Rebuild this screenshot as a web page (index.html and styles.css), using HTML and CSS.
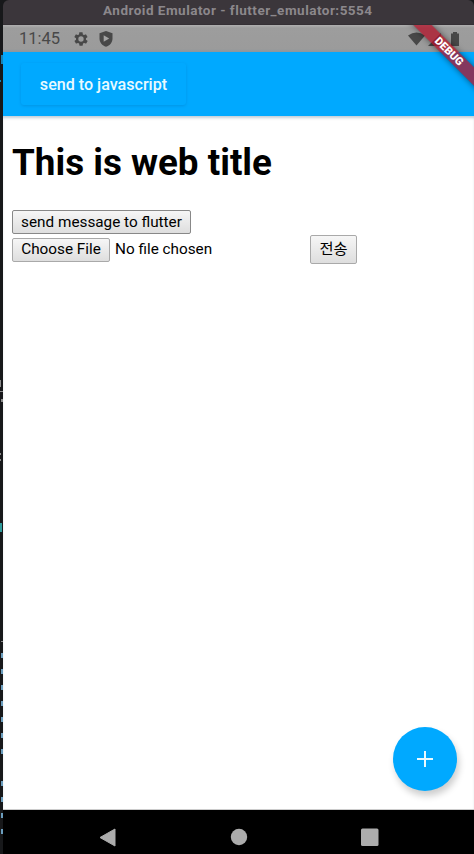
FILE: index.html
```
<!DOCTYPE html>
<html lang="ko">
<head>
    <meta charset="UTF-8">
    <title>Android Emulator</title>
    <link rel="stylesheet" href="styles.css">
</head>
<body>
    <svg class="editor" width="3" height="854">
        <g fill="#1684b8">
            <rect x="1" y="55" width="2" height="9"/>
            <rect y="80" width="1" height="2"/>
        </g>
        <g fill="#8a8a8a">
            <rect y="380" width="1" height="7"/>
            <rect y="391" width="3" height="1"/>
            <rect x="1" y="399" width="2" height="3"/>
            <rect y="453" width="1" height="2"/>
            <rect y="459" width="1" height="2"/>
            <rect x="1" y="641" width="2" height="1"/>
        </g>
        <rect y="523" width="2" height="9" fill="#2f9c9c"/>
        <path d="M2 653v5M2 669v5M2 685v5M2 701v5M2 717v5M2 733v5M2 749v5M2 781v5M2 797v5M2 813v5M2 829v5" stroke="#6b9dbd" stroke-width="2"/>
    </svg>
    <div class="emulator">
        <div class="titlebar"><span>Android Emulator - flutter_emulator:5554</span></div>
        <div class="screen">
            <div class="status">
                <span class="time">11:45</span>
                <svg class="gear" width="16" height="16" viewBox="0 0 24 24">
                    <path d="M19.4 13c0-.3.1-.6.1-1s0-.7-.1-1l2.1-1.600c.2-.2.3-.4.1-.7l-2-3.400c-.1-.2-.4-.3-.6-.2l-2.500 1c-.5-.4-1.100-.7-1.700-1l-.4-2.600c0-.3-.2-.5-.5-.5h-4c-.3 0-.5.2-.5.4l-.4 2.700c-.6.2-1.100.6-1.700 1l-2.500-1c-.2-.1-.5 0-.6.2l-2 3.400c-.1.2-.1.5.1.7L4.600 11c0 .3-.1.7-.1 1s0 .7.100 1l-2.100 1.600c-.2.2-.3.4-.1.7l2 3.400c.1.2.4.3.6.2l2.500-1c.5.4 1.100.7 1.700 1l.4 2.600c0 .3.200.500.500.500h4c.3 0 .5-.2.5-.5l.4-2.600c.6-.3 1.200-.6 1.700-1l2.500 1c.2.1.5 0 .6-.2l2-3.400c.1-.2.1-.5-.1-.7zM12 16a4 4 0 1 1 0-8 4 4 0 0 1 0 8z" fill="#484848"/>
                </svg>
                <svg class="shield" width="14" height="16" viewBox="0 0 14 16">
                    <path d="M7 0l6.500 2.300v5.200c0 4-2.700 7-6.500 8.300C3.200 14.500.5 11.500.5 7.500V2.300z" fill="#484848"/>
                    <path d="M4.700 4.200v6.600l5.500-3.300z" fill="#a3a3a3"/>
                </svg>
                <svg class="signals" width="54" height="16" viewBox="0 0 54 16">
                    <path d="M0 4.500Q8.500-1.500 17 4.500L8.500 14.500z" fill="#484848"/>
                    <path d="M20 15L33 2v13z" fill="#484848"/>
                    <path d="M43 2.500h2V1h4v1.500h2V15h-8z" fill="#484848"/>
                </svg>
            </div>
            <div class="appbar"><button class="js">send to javascript</button></div>
            <div class="debug"><span>DEBUG</span></div>
        </div>
        <div class="webview">
            <h1>This is web title</h1>
            <div><button class="native message">send message to flutter</button></div>
            <div class="upload">
                <button class="native choose">Choose File</button>
                <span class="filename">No file chosen</span>
                <button class="native submit">전송</button>
            </div>
            <div class="fab">
                <svg width="18" height="18"><path d="M9 1v16M1 9h16" stroke="#e9faff" stroke-width="2"/></svg>
            </div>
        </div>
        <div class="navbar">
            <svg width="471" height="44">
                <path d="M97 27.500L112 19v17z" fill="#acacac" stroke="#acacac" stroke-linejoin="round"/>
                <circle cx="236" cy="27" r="8.200" fill="#acacac"/>
                <rect x="358" y="18.500" width="17.500" height="17.500" rx="1.500" fill="#acacac"/>
            </svg>
        </div>
    </div>
</body>
</html>
```

FILE: styles.css
```
* { box-sizing: border-box; }
body {
    margin: 0;
    display: flex;
    width: 474px;
    height: 854px;
    overflow: hidden;
    background: #17181a;
    font-family: Roboto, "Noto Sans CJK KR", sans-serif;
}
.editor {
    flex: none;
    display: block;
}
.emulator {
    width: 471px;
    display: flex;
    flex-direction: column;
}
.titlebar {
    height: 25px;
    padding-top: 2px;
    padding-left: 100px;
    background: #3b363b;
    border-top-left-radius: 6px;
    border-top-right-radius: 6px;
    border-bottom: 1px solid #353035;
    color: #8c888c;
    font: bold 13.500px/17px Roboto, sans-serif;
    letter-spacing: 0.49px;
    white-space: nowrap;
}
.screen {
    position: relative;
    height: 91px;
    overflow: hidden;
}
.status {
    height: 27px;
    padding: 0 12px 0 16px;
    display: flex;
    align-items: center;
    background: linear-gradient(#b0b0b0 0, #9d9d9d 3px, #9b9b9b 24px, #8b969c 27px);
    color: #484848;
}
.time {
    width: 54px;
    font-size: 16.500px;
}
.shield { margin-left: 10px; }
.signals { margin-left: auto; }
.appbar {
    height: 64px;
    padding: 11px 18px;
    background: #00a9ff;
}
.js {
    width: 165px;
    height: 42px;
    padding: 0;
    border: 0;
    border-radius: 3px;
    background: #00a9ff;
    box-shadow: 0 1px 3px rgba(0, 70, 130, 0.2);
    color: #e9faff;
    font: 500 16.100px Roboto, sans-serif;
}
.debug {
    position: absolute;
    right: -40px;
    top: 20px;
    width: 130px;
    height: 13px;
    background: rgba(176, 18, 40, 0.75);
    box-shadow: 0 0 6px rgba(0, 0, 0, 0.5);
    transform: rotate(45deg);
    color: #fff;
    font: 900 11px/13px Roboto, sans-serif;
    text-align: center;
}
.webview {
    position: relative;
    height: 694px;
    padding: 25px 9px;
    background: #fff;
    border-bottom: 1px solid #ccc;
    box-shadow: inset 0 3px 3px -1px rgba(0, 60, 100, 0.25);
    color: #000;
}
h1 {
    margin: 0 0 25px;
    font-size: 36.800px;
    line-height: 44px;
    white-space: nowrap;
}
.native {
    height: 24px;
    padding: 0 0 1px;
    border: 1px solid #a9a9a9;
    border-radius: 2px;
    background: linear-gradient(#f6f6f6, #dedede);
    color: #000;
    font: 15.300px Roboto, "Noto Sans CJK KR", sans-serif;
    white-space: nowrap;
}
.message {
    display: block;
    width: 179px;
    border-color: #888;
}
.upload {
    display: flex;
    align-items: center;
    height: 30px;
}
.choose {
    width: 98px;
    margin-top: 1px;
}
.filename {
    width: 195px;
    margin-left: 5px;
    font-size: 15.300px;
}
.submit {
    width: 47px;
    height: 29px;
    padding-bottom: 4px;
}
.fab {
    position: absolute;
    right: 17px;
    bottom: 18px;
    display: flex;
    align-items: center;
    justify-content: center;
    width: 64px;
    height: 64px;
    border-radius: 50%;
    background: #00a9ff;
    box-shadow: 2px 5px 7px rgba(0, 0, 0, 0.2);
}
.navbar {
    height: 44px;
    background: #000;
}
.navbar svg { display: block; }
```
